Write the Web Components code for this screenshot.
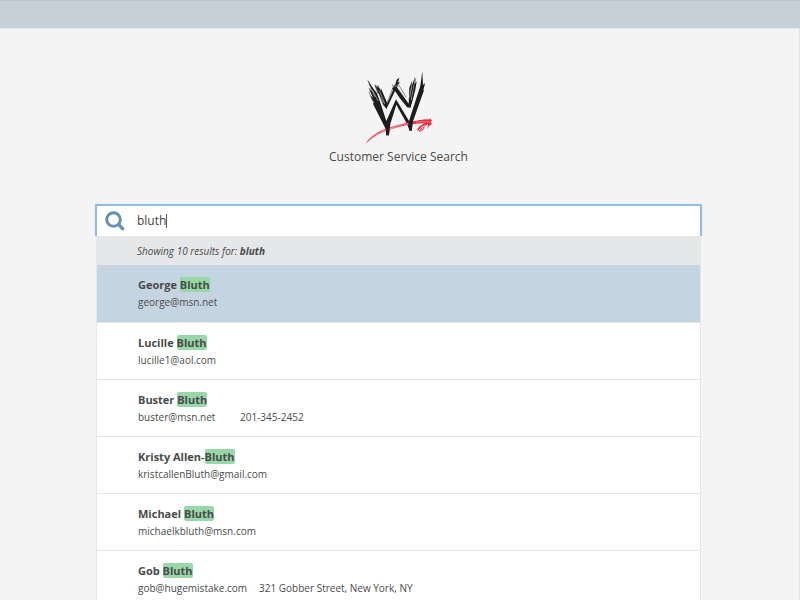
<!DOCTYPE html>
<html lang="en">
<head>
<meta charset="utf-8">
<meta name="viewport" content="width=device-width, initial-scale=1">
<title>Customer Service Search</title>
<style>
html, body { margin: 0; height: 100%; overflow: hidden; }
body { background: #f4f4f4; color: #4a4a4a; font: 12px/18px "Open Sans", "Noto Sans", sans-serif; }
</style>
</head>
<body>
<search-page>
  <brand-mark slot="brand">Customer Service Search</brand-mark>
  <search-box value="bluth"></search-box>
  <result-list count="10" query="bluth">
    <result-item selected first="George " match="Bluth"><span>george@msn.net</span></result-item>
    <result-item first="Lucille " match="Bluth"><span>lucille1@aol.com</span></result-item>
    <result-item first="Buster " match="Bluth"><span>buster@msn.net</span><span>201-345-2452</span></result-item>
    <result-item first="Kristy Allen-" match="Bluth"><span>kristcallenBluth@gmail.com</span></result-item>
    <result-item first="Michael " match="Bluth"><span>michaelkbluth@msn.com</span></result-item>
    <result-item first="Gob " match="Bluth"><span>gob@hugemistake.com</span><span>321 Gobber Street, New York, NY</span></result-item>
  </result-list>
</search-page>
<script>
class BaseElement extends HTMLElement {
  connectedCallback() {
    if (this.shadowRoot) return;
    this.attachShadow({ mode: "open" }).innerHTML = this.render();
    this.ready();
  }
  ready() {}
}

customElements.define("search-page", class extends BaseElement {
  render() {
    return `<style>
      :host { display: block; min-height: 100vh; box-sizing: border-box; border-right: 1px solid #e3e4e5; }
      header { height: 27px; background: #c7cfd7; border-top: 1px solid #bcc6cf; border-bottom: 1px solid #e4e6e8; margin-right: -1px; }
      main { padding: 32px 97px 0 95px; }
    </style>
    <header></header>
    <main><slot name="brand"></slot><slot></slot></main>`;
  }
});

customElements.define("brand-mark", class extends BaseElement {
  render() {
    return `<style>
      :host { display: flex; flex-direction: column; align-items: center; margin-bottom: 38px; }
      svg { display: block; width: 90px; height: 87px; }
      h1 { margin: 0; font-size: 12px; line-height: 18px; font-weight: 400; }
    </style>
    <svg viewBox="-4 1 270 261" aria-hidden="true">
      <g fill="#1d1d1f">
        <path d="M36 56 L49 77 L67 101 L93 181 L122 116 L161 181 L195 75 L201 32 L203 73 L209 68 L204 88 L206 89 L172 185 L169 210 L163 210 L154 188 L123 132 L102 199 L101 224 L93 224 L90 203 L52 128 L56 128 L45 104 L53 111 L39 80 L48 91 Z"/>
        <path d="M57 71 L66 82 L66 74 L77 91 L76 81 L96 128 L113 88 L110 84 L120 71 L124 57 L132 51 L128 66 L134 63 L125 80 L160 129 L162 81 L170 61 L169 77 L179 48 L176 72 L184 62 L180 87 L166 142 L155 140 L133 112 L119 91 L93 146 L88 137 L85 139 L72 106 L70 108 Z"/>
      </g>
      <g fill="none" stroke="#f4f4f4" stroke-linecap="round">
        <path stroke-width="5" d="M68 100 L94 162 L121 104 L161 160 L190 82"/>
        <path stroke-width="1.6" d="M43 76 L59 108 M51 88 L68 120 M63 84 L83 126 M73 91 L88 129 M169 76 L163 110 M176 73 L168 117 M119 78 L131 70 M104 143 L115 124 M133 115 L151 136"/>
      </g>
      <g fill="none" stroke="#1d1d1f" stroke-linecap="round" stroke-width="1.5">
        <path d="M41 94 L51 119 M61 73 L84 133 M68 75 L92 128 M207 70 L197 104 M181 54 L172 107 M121 85 L145 119 M110 88 L91 138 M129 71 L152 109 M115 82 L111 72"/>
      </g>
      <g fill="#ee293d">
        <path d="M31 249 C48 220 82 205 121 195 C158 185 192 176 221 177 L226 173 L227 188 L231 189 L221 196 L216 205 L218 190 C202 194 191 202 188 210 C192 211 204 205 211 198 C204 210 193 215 187 211 C183 205 194 194 209 188 C178 187 138 196 109 205 C75 215 52 229 31 249 Z"/>
      </g>
      <path fill="none" stroke="#ee293d" stroke-width="3" d="M188 208 Q197 194 220 185 M193 207 Q207 200 217 187 M188 181 Q207 175 230 179"/>
      <path fill="none" stroke="#f7acb3" stroke-width="2" d="M42 235 Q74 211 121 200 M77 212 Q125 195 160 189 M182 184 Q204 182 222 184"/>
      <path fill="#1d1d1f" d="M90 190 L105 190 L101 224 L93 224 Z M158 181 L173 181 L169 210 L163 210 Z"/>
    </svg>
    <h1><slot></slot></h1>`;
  }
});

customElements.define("search-box", class extends BaseElement {
  render() {
    return `<style>
      :host { display: block; }
      label { display: flex; align-items: center; height: 30px; padding-left: 8px; background: #fff; border: 2px solid #90bbe2; border-bottom: 0; border-radius: 2px 2px 0 0; box-shadow: 0 0 1px #a9cbe9; }
      svg { width: 20px; height: 20px; margin-right: 12px; flex: none; }
      .field { flex: 1; display: flex; align-items: center; }
      input { field-sizing: content; min-width: 0; padding: 0; border: 0; outline: 0; background: none; font: inherit; color: #444; caret-color: transparent; }
      i { width: 1px; height: 14px; background: #555; }
    </style>
    <label>
      <svg viewBox="0 0 20 20" aria-hidden="true"><circle cx="8.5" cy="8.5" r="6.8" fill="none" stroke="#6592ad" stroke-width="3"/><path d="M13.6 13.6 L17.7 17.7" stroke="#6592ad" stroke-width="3.4" stroke-linecap="round"/></svg>
      <span class="field"><input type="text" aria-label="Customer Service Search" value="${this.getAttribute("value")}"><i></i></span>
    </label>`;
  }
});

customElements.define("result-list", class extends BaseElement {
  render() {
    return `<style>
      :host { display: block; margin: 0 1px; border: solid #e6e7e8; border-width: 0 1px; background: #fff; }
      p { margin: 0; padding: 6px 40px 5px; line-height: 18px; font-size: 10px; font-style: italic; background: #e6e7e9; }
    </style>
    <p>Showing ${this.getAttribute("count")} results for: <b>${this.getAttribute("query")}</b></p>
    <div role="list"><slot></slot></div>`;
  }
});

customElements.define("result-item", class extends BaseElement {
  render() {
    return `<style>
      :host { display: block; padding: 11px 41px 10px; border-bottom: 1px solid #e5e6e7; }
      :host([selected]) { padding-bottom: 11px; background: #c5d4e1; }
      h2 { margin: 0; font-size: 11px; line-height: 17px; font-weight: 700; white-space: pre-wrap; }
      mark { color: inherit; background: #97d7a8; border-radius: 2px; }
      div { display: flex; gap: 12px; font-size: 10px; line-height: 18px; }
      ::slotted(span:first-child:not(:last-child)) { min-width: 90px; }
    </style>
    <h2>${this.getAttribute("first")}<mark>${this.getAttribute("match")}</mark></h2>
    <div><slot></slot></div>`;
  }
  ready() { this.setAttribute("role", "listitem"); }
});
</script>
</body>
</html>
